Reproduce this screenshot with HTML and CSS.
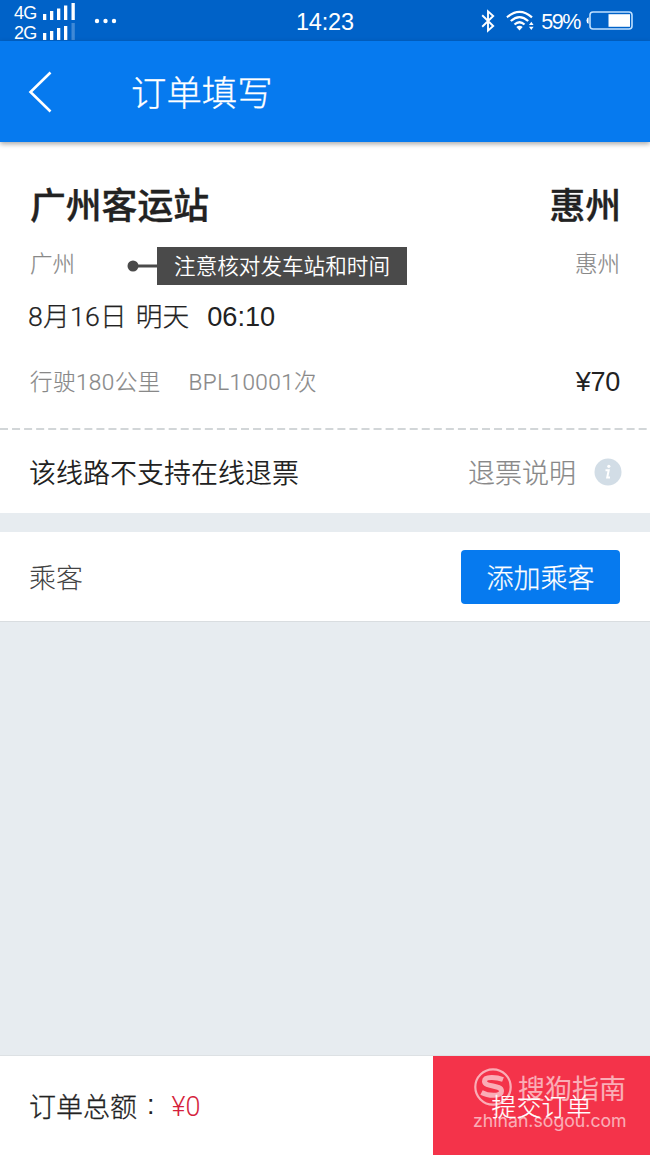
FILE: index.html
```html
<!DOCTYPE html>
<html lang="zh-CN">
<head>
<meta charset="utf-8">
<title>订单填写</title>
<link rel="stylesheet" href="styles.css">
</head>
<body>
<div class="screen">
  <div class="status">
    <div class="networks">
      <div class="network"><span>4G</span>
        <svg width="34" height="19" viewBox="0 0 34 19" fill="#fff"><path d="M1 13h3.300v6H1zM8 10h3.300v9H8zM15 7.500h3.300V19h-3.300zM22 4.500h3.300V19h-3.300zM29.500 2h3.300v17h-3.300z"/></svg>
      </div>
      <div class="network"><span>2G</span>
        <svg width="34" height="19" viewBox="0 0 34 19" fill="#fff"><path d="M1 12h3.300v7H1zM8 10h3.300v9H8zM15 7h3.300v12h-3.300zM22 5h3.300v14h-3.300z"/><path d="M29.500 2h3.300v17h-3.300z" opacity=".25"/></svg>
      </div>
    </div>
    <svg class="more" width="24" height="6" viewBox="0 0 24 6" fill="#fff"><circle cx="3" cy="3" r="2.2"/><circle cx="11.5" cy="3" r="2.2"/><circle cx="20" cy="3" r="2.2"/></svg>
    <div class="clock">14:23</div>
    <div class="indicators">
      <svg class="bluetooth" width="14" height="24" viewBox="0 0 14 24" fill="none" stroke="#fff" stroke-width="1.9"><path d="M1.2 6.3L12.2 17 7 21.700V2.300L12.200 7 1.200 17.700"/></svg>
      <svg class="wifi" width="28" height="21" viewBox="0 0 28 21" fill="none" stroke="#fff" stroke-width="2.200"><path d="M1 7.300Q13.500-3.700 26 7.300M4.800 11Q13.500 3.100 22.200 11M8.500 14.500Q13.500 10 18.500 14.500"/><path d="M10.300 17Q13.500 14.500 16.700 17L13.500 20.500zM23 15l2.300-3.200 2.300 3.200zM23 16.800l2.300 3.200 2.300-3.200z" fill="#fff" stroke="none"/></svg>
      <span class="percent">59%</span>
      <svg class="battery" width="47" height="20" viewBox="0 0 47 20"><rect x="4" y="1" width="42" height="17" rx="3" fill="none" stroke="#bfe0ff" stroke-width="1.600"/><path d="M22.500 3.200H44V15.800H22.500z" fill="#fff"/><path d="M2.600 6.200v6.600Q.5 12.400.5 9.500T2.600 6.200z" fill="#fff"/></svg>
    </div>
  </div>

  <header class="header">
    <svg class="back" width="26" height="44" viewBox="0 0 26 44" fill="none" stroke="#fff" stroke-width="2.600"><path d="M22.500 2.500L2.500 22l20 19.500"/></svg>
    <h1 class="title">订单填写</h1>
  </header>

  <section class="trip">
    <div class="row stations"><span>广州客运站</span><span>惠州</span></div>
    <div class="row cities">
      <span class="city">广州</span>
      <div class="callout">
        <svg width="31" height="14" viewBox="0 0 31 14"><circle cx="7" cy="7" r="5.500" fill="#4a4a4a"/><path d="M6 7h25" stroke="#4a4a4a" stroke-width="3"/></svg>
        <div class="callout-text">注意核对发车站和时间</div>
      </div>
      <span class="city city-to">惠州</span>
    </div>
    <div class="departure"><span class="date">8月16日</span><span class="day">明天</span><span class="time">06:10</span></div>
    <div class="row details"><span class="distance">行驶180公里</span><span class="code">BPL10001次</span><span class="price">¥70</span></div>
  </section>
  <svg class="divider" width="650" height="2" viewBox="0 0 650 2"><path d="M0 1H650" stroke="#d2d6d8" stroke-width="2" stroke-dasharray="8 4.050"/></svg>
  <section class="row refund">
    <span>该线路不支持在线退票</span>
    <span class="refund-link">退票说明</span>
    <svg width="28" height="28" viewBox="0 0 28 28"><circle cx="14" cy="14" r="13.500" fill="#d2dde6"/><circle cx="14.800" cy="8.300" r="1.600" fill="#fff"/><path d="M11.500 12.200H14.700L13.200 19.500H16" stroke="#fff" stroke-width="2" fill="none"/></svg>
  </section>

  <section class="row passenger">
    <span>乘客</span>
    <button class="add">添加乘客</button>
  </section>
  <main class="blank"></main>
  <footer class="footer">
    <div class="total"><span class="total-label">订单总额</span><span class="colon">:</span><span class="amount">¥0</span></div>
    <div class="submit"><span class="submit-label">提交订单</span>
      <div class="watermark">
        <div class="brand">
          <svg width="40" height="40" viewBox="0 0 40 40" fill="none" stroke="#fff"><circle cx="20" cy="20" r="17.700" stroke-width="2.200"/><path d="M30 12.500C24 10.300 11.500 9 11.500 14.200C11.500 20.500 28.500 17.500 28.500 24C28.500 30 15 29 8.500 25.500" stroke-width="5"/></svg>
          <span>搜狗指南</span>
        </div>
        <div class="site">zhinan.sogou.com</div>
      </div>
    </div>
  </footer>
</div>
</body>
</html>
```
FILE: styles.css
```css
* { box-sizing: border-box; }
body { margin: 0; font-family: "Liberation Sans", "Noto Sans CJK SC", sans-serif; color: #222; }
svg { display: block; flex: none; }
span, .title, .clock, .site, .callout-text { white-space: nowrap; }
.screen { width: 650px; height: 1155px; display: flex; flex-direction: column; overflow: hidden; background: #fff; }
.row { display: flex; align-items: center; justify-content: space-between; padding: 0 30px; }

.status { height: 41px; flex: none; background: #0062c8; color: #fff; display: grid; grid-template-columns: 80px 216px 1fr auto; align-items: center; padding-right: 17px; }
.networks { padding-left: 14px; align-self: start; }
.network { display: flex; align-items: center; height: 20px; font-size: 18px; }
.network span { width: 28px; letter-spacing: -0.800px; padding-top: 7px; }
.more { margin-left: 14px; }
.clock { font-size: 23.500px; padding-top: 3px; letter-spacing: -0.200px; }
.indicators { display: flex; align-items: center; height: 41px; }
.bluetooth { margin-right: 11px; margin-left: -1px; }
.wifi { margin-right: 7px; }
.percent { font-size: 21.500px; letter-spacing: -1.400px; padding-top: 3px; margin-right: 6px; }

.header { height: 101px; flex: none; background: #067aef; color: #fff; display: flex; align-items: center; padding-left: 28px; box-shadow: 0 2px 5px rgba(0, 0, 0, .35); position: relative; }
.title { margin: 0 0 0 77px; padding-bottom: 1px; font-size: 35.400px; font-weight: 300; line-height: 50px; font-family: "Noto Sans CJK SC", sans-serif; -webkit-text-stroke: 0.300px #fff; }

.trip { height: 286px; flex: none; padding-top: 34px; }
.stations { height: 54px; padding-right: 29px; font-size: 35.800px; font-weight: 500; -webkit-text-stroke: 0.400px #222; }
.cities { height: 67px; font-size: 22.500px; color: #888; }
.city { font-weight: 300; padding-bottom: 4px; -webkit-text-stroke: 0.200px #888; }
.callout { display: flex; align-items: center; margin-left: 51px; margin-top: 5px; }
.callout-text { width: 250px; height: 38px; line-height: 40px; text-align: center; background: #4a4a4a; color: #fff; font-size: 21.600px; font-weight: 350; }
.city-to { margin-left: auto; }
.departure { height: 38px; display: flex; align-items: center; padding-left: 28px; font-size: 26.700px; }
.date, .day { font-family: Roboto, "Noto Sans CJK SC", sans-serif; font-weight: 300; padding-bottom: 3px; -webkit-text-stroke: 0.250px #222; }
.date { letter-spacing: 0.200px; }
.day { margin-left: 9px; }
.time { margin-left: 18px; padding-top: 2px; font-size: 27.200px; }
.details { height: 92px; font-size: 22.500px; font-weight: 300; color: #888; font-family: Roboto, "Noto Sans CJK SC", sans-serif; }
.distance, .code { padding-bottom: 3px; letter-spacing: 0.450px; -webkit-text-stroke: 0.200px #888; }
.code { margin-left: 28px; }
.price { margin-left: auto; padding-top: 2px; color: #222; font-family: "Liberation Sans", sans-serif; font-size: 27px; letter-spacing: -0.300px; }
.refund { height: 83px; flex: none; font-size: 27px; font-weight: 350; padding: 0 29px; }
.refund-link { margin-left: auto; margin-right: 18px; color: #888; font-weight: 300; -webkit-text-stroke: 0.200px #888; }
.refund svg { margin-right: -1px; }
.passenger { height: 109px; flex: none; border-top: 19px solid #e7ecf0; box-shadow: inset 0 -1px #d9dde0; padding-left: 29px; font-size: 27px; font-weight: 300; color: #444; }
.passenger span { padding-bottom: 2px; }
.add { width: 159px; height: 54px; border: 0; border-radius: 4px; background: #067aef; color: #fff; font: 300 27px/50px "Noto Sans CJK SC", sans-serif; padding: 0; -webkit-text-stroke: 0.250px #fff; }
.blank { flex: 1; background: #e7ecf0; border-bottom: 1px solid #dde1e4; }
.footer { height: 99px; flex: none; display: flex; }
.total { flex: 1; display: flex; align-items: center; padding-left: 29px; font-size: 27px; }
.total-label { font-weight: 300; -webkit-text-stroke: 0.300px #222; }
.colon { margin-left: 10px; }
.amount { margin-left: 17px; padding-top: 2px; color: #d51f3d; font-family: Roboto, sans-serif; font-weight: 300; }
.submit { width: 217px; background: #f4334a; color: #fff; display: flex; align-items: center; justify-content: center; position: relative; }
.submit-label { font-size: 25px; font-weight: 300; padding-bottom: 2px; -webkit-text-stroke: 0.200px #fff; }
.watermark { position: absolute; left: 40px; top: 11px; opacity: .6; }
.brand { display: flex; align-items: center; height: 40px; gap: 5px; font-size: 27px; }
.site { font-family: Inter, sans-serif; font-size: 17.700px; line-height: 27px; }
```
